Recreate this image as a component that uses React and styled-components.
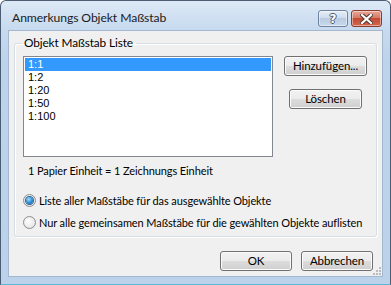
import styled, { createGlobalStyle } from 'styled-components'

const Global = createGlobalStyle`
    html, body { margin: 0; padding: 0; background: #fff; }
    body { font-family: Lato, "Noto Sans", sans-serif; font-size: 11px; letter-spacing: -0.1px; color: #000; }
    * { box-sizing: border-box; }
`

const Window = styled.div`
    width: 391px;
    height: 285px;
    display: flex;
    flex-direction: column;
    border: 1px solid #4a5d73;
    border-bottom-color: #5bb7d8;
    border-radius: 6px 6px 0 0;
    background: linear-gradient(#dde9f6 0px, #c7daef 28px, #bdd3eb 60px, #bcd2ea);
    padding: 0 7px 7px 7px;
`
const TitleBar = styled.div`
    height: 29px;
    display: flex;
    align-items: flex-start;
    justify-content: space-between;
`
const Title = styled.div`
    font-size: 12.2px;
    padding: 9px 0 0 4px;
    color: #1b1b1b;
`
const Caption = styled.div`
    display: flex;
    gap: 3px;
    margin-top: 9px;
    margin-right: 1px;
`
const CapButton = styled.div`
    width: ${p => p.$w}px;
    height: 17px;
    border-radius: 3px;
    border: 1px solid ${p => (p.$close ? '#8b3a2c' : '#6e839d')};
    background: ${p => p.$close
        ? 'linear-gradient(#e9a899, #d77a66 45%, #c44a33 50%, #d3674f)'
        : 'linear-gradient(#e6eef8, #cfdcec 45%, #b9cbe2 50%, #c9d9ec)'};
    box-shadow: inset 0 0 0 1px rgba(255,255,255,0.45);
    display: flex;
    align-items: center;
    justify-content: center;
`
const Glyph = styled.span`
    font-family: "DejaVu Sans", sans-serif;
    font-weight: bold;
    font-size: 12px;
    line-height: 1;
    color: #fff;
    text-shadow: 1px 0 #4d5a6b, -1px 0 #4d5a6b, 0 1px #4d5a6b, 0 -1px #4d5a6b;
`

const Client = styled.div`
    flex: 1;
    background: #f0f0f0;
    border: 1px solid #a3b8cf;
    display: flex;
    flex-direction: column;
    position: relative;
`
const Group = styled.fieldset`
    margin: 5px 5px 0 5px;
    height: 201px;
    border: 1px solid #d5dfe5;
    border-radius: 3px;
    box-shadow: inset 1px 1px 0 #fff, 1px 1px 0 #fff;
    padding: 6px 8px 0 8px;
    display: flex;
    flex-direction: column;
`
const Legend = styled.legend`
    padding: 0 3px 0 2px;
    margin-left: -1px;
    font-size: 11.8px;
    line-height: 14px;
`
const TopRow = styled.div`
    display: flex;
    align-items: flex-start;
`
const ListBox = styled.div`
    width: 250px;
    height: 101px;
    border: 1px solid #828790;
    background: #fff;
    padding: 1px;
`
const Item = styled.div`
    height: 13px;
    line-height: 13px;
    padding-left: 3px;
    font-family: "Liberation Sans", Arial, sans-serif;
    font-size: 11px;
    letter-spacing: 0;
    background: ${p => (p.$selected ? '#3399ff' : 'transparent')};
    color: ${p => (p.$selected ? '#fff' : '#000')};
`
const ButtonCol = styled.div`
    width: 83px;
    margin-left: 11px;
    display: flex;
    flex-direction: column;
    align-items: center;
    gap: 13px;
`
const Button = styled.div`
    width: ${p => p.$w}px;
    height: 20px;
    border: 1px solid #707070;
    border-radius: 3px;
    background: linear-gradient(#f2f2f2, #ebebeb 50%, #dddddd 50%, #cfcfcf);
    box-shadow: inset 0 0 0 1px #fbfbfb;
    display: flex;
    align-items: center;
    justify-content: center;
    font-size: 11.5px;
    line-height: 1;
    padding-bottom: 1px;
`
const Info = styled.div`
    margin: 6px 0 0 5px;
    line-height: 15px;
`
const Radios = styled.div`
    display: flex;
    flex-direction: column;
    gap: 7px;
    margin-top: 15px;
`
const RadioRow = styled.div`
    display: flex;
    align-items: center;
    gap: 3px;
    line-height: 15px;
    white-space: nowrap;
`
const RadioDot = styled.span`
    width: 13px;
    height: 13px;
    border-radius: 50%;
    border: 1px solid #8b8e91;
    background: radial-gradient(circle at 40% 40%, #ffffff, #dcdcdc);
    display: flex;
    align-items: center;
    justify-content: center;
    &::after {
        content: '';
        width: 7px;
        height: 7px;
        border-radius: 50%;
        display: ${p => (p.$on ? 'block' : 'none')};
        background: radial-gradient(circle at 40% 35%, #9fe0ff, #2a8ad4 55%, #0f4f8c);
        box-shadow: 0 0 0 1px #2c5f93;
    }
`
const Footer = styled.div`
    display: flex;
    justify-content: flex-end;
    gap: 9px;
    padding: 14px 9px 0 0;
`
const Grip = styled.svg`
    position: absolute;
    right: 1px;
    bottom: 1px;
`

const scales = ['1:1', '1:2', '1:20', '1:50', '1:100']

const App = () => {
    return (
        <>
            <Global />
            <Window>
                <TitleBar>
                    <Title>Anmerkungs Objekt Maßstab</Title>
                    <Caption>
                        <CapButton $w={30}><Glyph>?</Glyph></CapButton>
                        <CapButton $w={31} $close>
                            <svg width="13" height="10" viewBox="0 0 13 10">
                                <path d="M2 1 L11 9 M11 1 L2 9" stroke="#4d3a36" strokeWidth="4.2" strokeLinecap="square" />
                                <path d="M2 1 L11 9 M11 1 L2 9" stroke="#fff" strokeWidth="2.2" strokeLinecap="square" />
                            </svg>
                        </CapButton>
                    </Caption>
                </TitleBar>
                <Client>
                    <Group>
                        <Legend>Objekt Maßstab Liste</Legend>
                        <TopRow>
                            <ListBox>
                                {scales.map((s, i) => (
                                    <Item key={s} $selected={i === 0}>{s}</Item>
                                ))}
                            </ListBox>
                            <ButtonCol>
                                <Button $w={83}>Hinzufügen...</Button>
                                <Button $w={73}>Löschen</Button>
                            </ButtonCol>
                        </TopRow>
                        <Info>1 Papier Einheit = 1 Zeichnungs Einheit</Info>
                        <Radios>
                            <RadioRow><RadioDot $on />Liste aller Maßstäbe für das ausgewählte Objekte</RadioRow>
                            <RadioRow><RadioDot />Nur alle gemeinsamen Maßstäbe für die gewählten Objekte auflisten</RadioRow>
                        </Radios>
                    </Group>
                    <Footer>
                        <Button $w={72}>OK</Button>
                        <Button $w={72}>Abbrechen</Button>
                    </Footer>
                    <Grip width="9" height="9" viewBox="0 0 9 9">
                        {[[7, 1], [7, 4], [4, 4], [7, 7], [4, 7], [1, 7]].map(([x, y]) => (
                            <rect key={`${x}-${y}`} x={x} y={y} width="2" height="2" fill="#b8bcc2" />
                        ))}
                    </Grip>
                </Client>
            </Window>
        </>
    )
}
export default App
